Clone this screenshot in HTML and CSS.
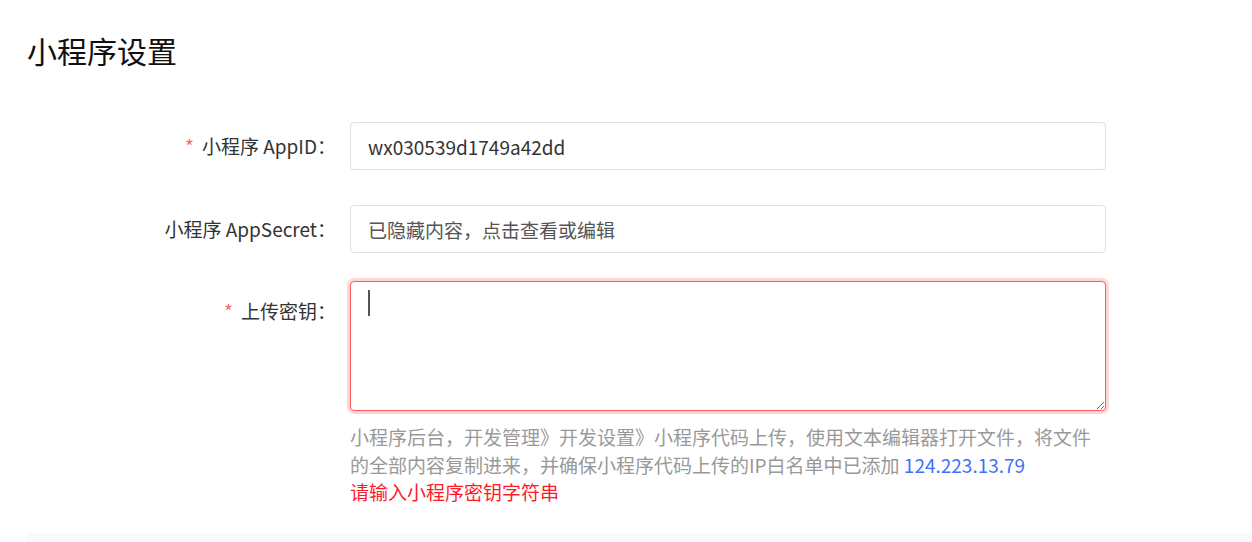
FILE: index.html
```html
<!DOCTYPE html>
<html>
<head>
    <meta charset="utf-8">
    <meta name="viewport" content="width=device-width, initial-scale=1.0">
    <title>小程序设置</title>
    <link rel="stylesheet" href="styles.css">
</head>
<body>
    <div class="page">
        <h2 class="title">小程序设置</h2>
        <form class="form">
            <div class="form-item">
                <label class="form-label"><span class="star">*</span>小程序 AppID：</label>
                <div class="form-control">
                    <input type="text" class="input" value="wx030539d1749a42dd">
                </div>
            </div>
            <div class="form-item">
                <label class="form-label">小程序 AppSecret：</label>
                <div class="form-control">
                    <input type="text" class="input input-muted" value="已隐藏内容，点击查看或编辑" readonly>
                </div>
            </div>
            <div class="form-item form-item-area">
                <label class="form-label label-area"><span class="star">*</span>上传密钥：</label>
                <div class="form-control">
                    <div class="area-wrap">
                        <textarea class="textarea is-error"></textarea>
                        <span class="caret"></span>
                    </div>
                    <div class="help">小程序后台，开发管理》开发设置》小程序代码上传，使用文本编辑器打开文件，将文件的全部内容复制进来，并确保小程序代码上传的IP白名单中已添加 <span class="ip">124.223.13.79</span></div>
                    <div class="error">请输入小程序密钥字符串</div>
                </div>
            </div>
        </form>
        <div class="footer-bar"></div>
    </div>
</body>
</html>
```

FILE: styles.css
```css
html, body {
    margin: 0;
    background: #fff;
}
body {
    font-family: "Noto Sans CJK SC", "Noto Sans", sans-serif;
    font-size: 19px;
    color: #333;
}
.page {
    padding-left: 27px;
    padding-top: 28px;
}
.title {
    margin: 0;
    font-size: 30px;
    font-weight: normal;
    line-height: 44px;
    color: #111;
}
.form {
    margin-top: 50px;
}
.form-item {
    display: flex;
    margin-bottom: 35px;
}
.form-item:nth-child(2) {
    margin-bottom: 28px;
}
.form-item-area {
    margin-bottom: 0;
}
.form-label {
    width: 309px;
    flex: none;
    text-align: right;
    line-height: 48px;
    color: #333;
    white-space: nowrap;
}
.label-area {
    padding-top: 6px;
}
.star {
    color: #f56c6c;
    margin-right: 8px;
}
.form-control {
    margin-left: 14px;
    width: 756px;
}
.input {
    box-sizing: border-box;
    width: 100%;
    height: 48px;
    padding: 0 17px;
    border: 1px solid #dcdfe6;
    border-radius: 4px;
    font-family: inherit;
    font-size: 19px;
    color: #333;
    outline: none;
}
.input-muted {
    color: #555;
}
.area-wrap {
    position: relative;
}
.textarea {
    display: block;
    box-sizing: border-box;
    width: 100%;
    height: 130px;
    padding: 8px 17px;
    border: 1px solid #ff5a5f;
    border-radius: 4px;
    box-shadow: 0 0 0 3px #ffd6d9;
    font-family: inherit;
    font-size: 19px;
    outline: none;
}
.caret {
    position: absolute;
    left: 18px;
    top: 9px;
    width: 2px;
    height: 26px;
    background: #555;
}
.help {
    margin-top: 12px;
    line-height: 28px;
    color: #999;
}
.ip {
    color: #3f6ffb;
}
.error {
    line-height: 26px;
    color: #ff1a2a;
}
.footer-bar {
    margin-top: 28px;
    height: 20px;
    background: #fafafa;
}
```
